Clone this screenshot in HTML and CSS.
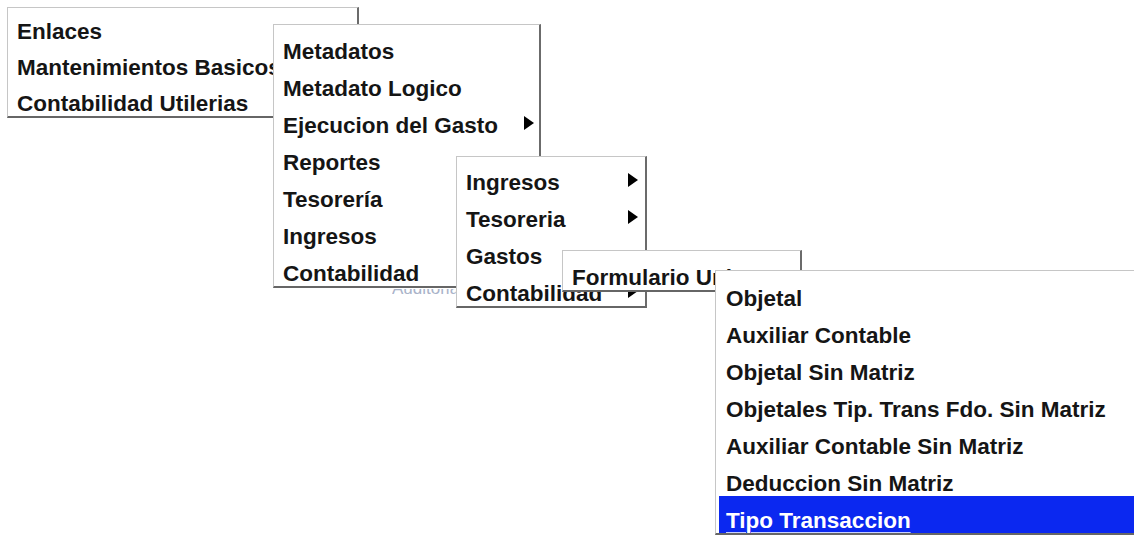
FILE: index.html
```html
<!DOCTYPE html>
<html lang="es">
<head>
    <meta charset="UTF-8" />
    <title>Menu</title>
    <link rel="stylesheet" href="styles.css">
</head>
<body>

<div class="desk">
    <div class="under"><span>Auditoria</span></div>

    <div class="menu m1">
        <div class="item">Enlaces</div>
        <div class="item">Mantenimientos Basicos</div>
        <div class="item">Contabilidad Utilerias</div>
    </div>

    <div class="menu m2">
        <div class="item">Metadatos</div>
        <div class="item">Metadato Logico</div>
        <div class="item">Ejecucion del Gasto <span class="arrow"></span></div>
        <div class="item">Reportes</div>
        <div class="item">Tesorería</div>
        <div class="item">Ingresos</div>
        <div class="item">Contabilidad</div>
    </div>

    <div class="menu m3">
        <div class="item">Ingresos <span class="arrow"></span></div>
        <div class="item">Tesoreria <span class="arrow"></span></div>
        <div class="item">Gastos</div>
        <div class="item">Contabilidad <span class="arrow"></span></div>
    </div>

    <div class="menu m4">
        <div class="item">Formulario Unico</div>
    </div>

    <div class="menu m5">
        <div class="item">Objetal</div>
        <div class="item">Auxiliar Contable</div>
        <div class="item">Objetal Sin Matriz</div>
        <div class="item">Objetales Tip. Trans Fdo. Sin Matriz</div>
        <div class="item">Auxiliar Contable Sin Matriz</div>
        <div class="item">Deduccion Sin Matriz</div>
        <div class="item active"><span class="label">Tipo Transaccion</span></div>
    </div>
</div>

</body>
</html>
```

FILE: styles.css
```css
body {
    margin: 0;
    background-color: #fff;
    font-family: "Liberation Sans", Arial, sans-serif;
    overflow: hidden;
}
.desk {
    position: relative;
    width: 1134px;
    height: 535px;
    overflow: hidden;
}
/* texto de la pagina que asoma debajo de los menus */
.under {
    position: absolute;
    left: 392px;
    top: 289px;
    height: 5px;
    overflow: hidden;
    font-size: 17px;
    line-height: 17px;
    color: #a9b3c9;
}
.under span {
    display: block;
    margin-top: -9px;
}
/* menus desplegables */
.menu {
    position: absolute;
    background-color: #fff;
    border-top: 1px solid #c6c6c6;
    border-left: 1px solid #c6c6c6;
    border-right: 2px solid #6b6b6b;
    border-bottom: 2px solid #666;
    padding-top: 2px;
    font-size: 22.5px;
    font-weight: bold;
    color: #151515;
    overflow: hidden;
}
.item {
    display: flex;
    align-items: flex-start;
    height: 37px;
    box-sizing: border-box;
    padding: 12px 5px 0 9px;
    line-height: 25px;
    white-space: nowrap;
}
.arrow {
    margin-left: auto;
    margin-top: 3px;
    width: 0;
    height: 0;
    border-left: 10px solid #000;
    border-top: 7px solid transparent;
    border-bottom: 7px solid transparent;
}
.m1 {
    left: 7px;
    top: 7px;
    width: 349px;
    padding-top: 0;
}
.m1 .item {
    height: 36px;
    padding-top: 11px;
}
.m2 {
    left: 273px;
    top: 24px;
    width: 265px;
}
.m3 {
    left: 456px;
    top: 156px;
    width: 188px;
    padding-top: 1px;
}
.m3 .item {
    padding-right: 7px;
}
.m4 {
    left: 562px;
    top: 250px;
    width: 237px;
}
.m5 {
    left: 715px;
    top: 270px;
    width: 480px;
    padding-top: 3px;
}
.m5 .item {
    margin-left: 3px;
    padding-left: 7px;
}
/* opcion seleccionada */
.m5 .active {
    background-color: #0b28f0;
    color: #fff;
}
.active .label {
    text-decoration: underline;
    text-decoration-color: #c8d0ff;
    text-underline-offset: 4px;
    text-decoration-thickness: 1px;
}
```
